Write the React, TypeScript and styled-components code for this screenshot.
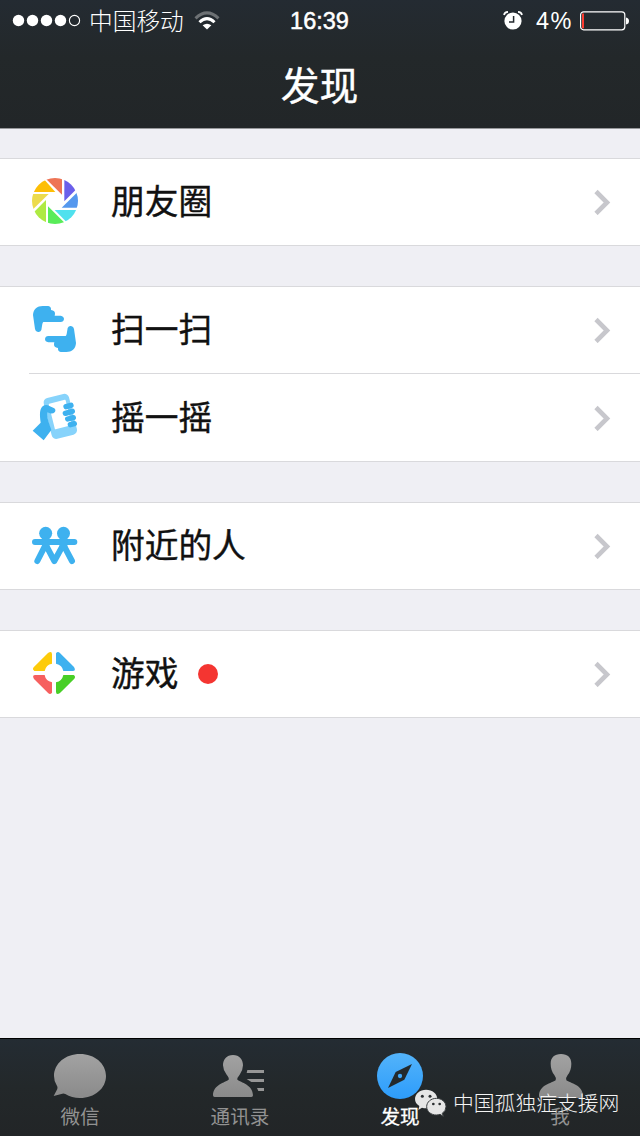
import React from 'react';
import styled, { createGlobalStyle } from 'styled-components';

const Global = createGlobalStyle`
  * { box-sizing: border-box; }
  body {
    margin: 0;
    background: #efeff4;
    font-family: "Liberation Sans", "Noto Sans CJK SC", sans-serif;
  }
`;

const cjk = '"Noto Sans CJK SC", sans-serif';

const Screen = styled.div`
  width: 640px;
  height: 1136px;
  display: flex;
  flex-direction: column;
  position: relative;
  overflow: hidden;
  background: #efeff4;
`;

const Header = styled.header`
  height: 129px;
  flex: none;
  color: #fff;
  background: linear-gradient(#242b32, #23282a 45%, #222628);
  border-bottom: 1px solid #97989b;
`;

const StatusBar = styled.div`
  height: 42px;
  display: grid;
  grid-template-columns: 1fr auto 1fr;
  align-items: center;
  padding: 0 11px 0 12px;
`;

const Signal = styled.div`
  display: flex;
  align-items: center;
`;

const Carrier = styled.span`
  font: 300 23.7px/38px ${cjk};
  padding-bottom: 2px;
  margin: 0 10px 0 7px;
`;

const Time = styled.span`
  font-size: 23.5px;
  line-height: 40px;
  padding-right: 2px;
  -webkit-text-stroke: 0.5px #fff;
`;

const Power = styled.div`
  display: flex;
  align-items: center;
  justify-content: flex-end;
  margin-right: -1px;
`;

const Percent = styled.span`
  font: 300 23.5px/38px "Liberation Sans", sans-serif;
  letter-spacing: 1.5px;
  margin: 0 7px 0 13px;
`;

const Title = styled.h1`
  margin: 0;
  padding-right: 1px;
  font: 400 38.8px/82px ${cjk};
  text-align: center;
  -webkit-text-stroke: 0.4px #fff;
`;

const Content = styled.main`
  flex: 1;
  display: flex;
  flex-direction: column;
  gap: 40px;
  padding-top: 29px;
`;

const Group = styled.section`
  background: #fff;
  border-top: 1px solid #d9d9dc;
  border-bottom: 1px solid #d9d9dc;
`;

const Row = styled.div<{ $tall?: boolean }>`
  height: ${(p) => (p.$tall ? 87 : 86)}px;
  display: flex;
  align-items: center;
  padding: 0 29px 0 31px;
`;

const Divider = styled.div`
  height: 1px;
  margin-left: 29px;
  background: #d9d9dc;
`;

const RowIcon = styled.svg`
  width: 48px;
  height: 48px;
  overflow: visible;
  flex: none;
`;

const Label = styled.span`
  margin-left: 32px;
  padding-bottom: 4px;
  font: 400 33.7px/48px ${cjk};
  color: #111;
  -webkit-text-stroke: 0.4px #111;
`;

const Dot = styled.i`
  width: 20px;
  height: 20px;
  margin-left: 20px;
  border-radius: 50%;
  background: #f43531;
`;

const ChevronIcon = styled.svg`
  margin-left: auto;
`;

const TabBar = styled.nav`
  height: 98px;
  flex: none;
  display: flex;
  border-top: 1px solid #000;
  background: linear-gradient(#242c33, #23282a 50%, #222527);
`;

const Tab = styled.div<{ $active?: boolean }>`
  flex: 1;
  display: flex;
  flex-direction: column;
  align-items: center;
  padding-top: 13px;
  color: ${(p) => (p.$active ? '#fff' : '#929292')};
  font: 400 19.6px/31px ${cjk};
  -webkit-text-stroke: ${(p) => (p.$active ? '0.3px #fff' : '0')};
`;

const TabIcon = styled.svg`
  width: 60px;
  height: 48px;
  overflow: visible;
`;

const Watermark = styled.div`
  position: absolute;
  left: 414px;
  top: 1087px;
  display: flex;
  align-items: center;
  gap: 6px;
  color: #f4f4f4;
  font: 300 20.8px/32px ${cjk};
`;

const WatermarkText = styled.span`
  padding-bottom: 2px;
  line-height: 30px;
`;

const Chevron = () => (
  <ChevronIcon width="17" height="26" viewBox="0 0 17 26" fill="none" stroke="#c7c7cc" strokeWidth="4.6">
    <path d="M2 2.500 13 13.500 2 24.500" />
  </ChevronIcon>
);

const MomentsIcon = () => (
  <RowIcon viewBox="33 84 144 144">
    <clipPath id="lens"><circle cx="105" cy="153" r="69" /></clipPath>
    <g clipPath="url(#lens)">
      <path fill="#ee7455" d="M79 88V80H126V134Z" />
      <path fill="#6b5fea" d="M133 80H172V115L133 154Z" />
      <path fill="#5598ee" d="M172 127H180V173H125Z" />
      <path fill="#50e1ee" d="M104 180H175V220H143Z" />
      <path fill="#59ec59" d="M84 169 135 220V225H84Z" />
      <path fill="#aeea43" d="M78 150V225H40V188Z" />
      <path fill="#ecdb4c" d="M30 132H86L36 181H30Z" />
      <path fill="#fdbe06" d="M36 126V92L72 88 106 126Z" />
    </g>
  </RowIcon>
);

const handPath =
  'M39 75C40 57 52 48 68 48H85Q94 50 93 60Q106 62 105 72L104 77H122Q132 79 132 87Q131 96 122 96H70Q68 97 67 102L64 120Q61 127 54 126Q46 125 45 117Z';

const ScanIcon = () => (
  <RowIcon viewBox="33 48 144 144" fill="#3eb1ef">
    <path d={handPath} />
    <path d={handPath} transform="rotate(180 103.5 117)" />
  </RowIcon>
);

const ShakeIcon = () => (
  <RowIcon viewBox="33 311 144 144">
    <g transform="rotate(-14 121 378)">
      <rect x="82" y="315" width="78" height="126" rx="14" fill="#87d3fb" />
      <rect x="96" y="333" width="52" height="79" rx="2" fill="#fff" />
    </g>
    <path
      fill="#3eb1ef"
      d="M38 421 62 397C59 374 58 357 68 348Q77 341 88 347L103 354Q109 359 104 366Q99 371 90 369L82 366C79 380 88 400 94 419L71 450Z"
    />
    <g stroke="#3eb1ef" strokeWidth="16" strokeLinecap="round">
      <path d="M138 349 153 345" />
      <path d="M136 369 157 363" />
      <path d="M143 386 160 382" />
      <path d="M151 403 163 400" />
    </g>
  </RowIcon>
);

const NearbyIcon = () => (
  <RowIcon viewBox="33 66 144 144" fill="#3eb1ef">
    <circle cx="77" cy="100" r="19.500" />
    <circle cx="130.500" cy="100" r="19.500" />
    <path
      d="M45 126H163M77 134 52 183M77 134 103 183 130 134 156 183"
      fill="none"
      stroke="#3eb1ef"
      strokeWidth="18"
      strokeLinecap="round"
      strokeLinejoin="round"
    />
    <path d="M66 112H88V150L78 152 66 140ZM119 112H142V140L130 152 119 145Z" />
  </RowIcon>
);

const petal = 'M43 123Q36 118 41 112L84 69Q96 62 96 73V101Q78 104 74 123Z';

const GamesIcon = () => (
  <RowIcon viewBox="33 60 144 144">
    <path d={petal} fill="#fdcb0a" />
    <path d={petal} fill="#3eb1ef" transform="rotate(90 102 129)" />
    <path d={petal} fill="#48cf27" transform="rotate(180 102 129)" />
    <path d={petal} fill="#f6605f" transform="rotate(270 102 129)" />
  </RowIcon>
);

const Wifi = () => (
  <svg width="26" height="20" viewBox="0 0 26 20" fill="none" strokeWidth="3">
    <path d="M1.500 7.300Q13-3.500 24.500 7.300" stroke="#6d7174" />
    <path d="M5.500 11.300Q13 4 20.500 11.300" stroke="#fff" />
    <path d="M13 18.500 8.600 14.300Q13 11 17.400 14.300Z" fill="#fff" />
  </svg>
);

const Alarm = () => (
  <svg width="20" height="20" viewBox="0 0 20 20">
    <circle cx="10" cy="10" r="8.600" fill="#fff" />
    <path d="M1 4Q1.500 1 5 0.900M19 4Q18.500 1 15 0.900" fill="none" stroke="#fff" strokeWidth="1.700" />
    <path d="M10.600 5V11H6" fill="none" stroke="#23292e" strokeWidth="1.500" />
  </svg>
);

const Battery = () => (
  <svg width="50" height="20" viewBox="0 0 50 20">
    <rect x="0.600" y="0.800" width="44.200" height="18" rx="3" fill="none" stroke="#fff" strokeWidth="1.200" />
    <rect x="2" y="2.500" width="2" height="14.800" fill="#fb3b30" />
    <path d="M46 6.500Q49 7 49 10T46 13.500Z" fill="#fff" />
  </svg>
);

const App = () => (
  <Screen>
    <Global />
    <Header>
      <StatusBar>
        <Signal>
          <svg width="70" height="14" viewBox="0 0 70 14" fill="#fff">
            <circle cx="6.500" cy="6.500" r="5.700" />
            <circle cx="20.500" cy="6.500" r="5.700" />
            <circle cx="34.500" cy="6.500" r="5.700" />
            <circle cx="48.500" cy="6.500" r="5.700" />
            <circle cx="62.500" cy="6.500" r="5.100" fill="none" stroke="#fff" strokeWidth="1.100" />
          </svg>
          <Carrier>中国移动</Carrier>
          <Wifi />
        </Signal>
        <Time>16:39</Time>
        <Power>
          <Alarm />
          <Percent>4%</Percent>
          <Battery />
        </Power>
      </StatusBar>
      <Title>发现</Title>
    </Header>
    <Content>
      <Group>
        <Row><MomentsIcon /><Label>朋友圈</Label><Chevron /></Row>
      </Group>
      <Group>
        <Row><ScanIcon /><Label>扫一扫</Label><Chevron /></Row>
        <Divider />
        <Row $tall><ShakeIcon /><Label>摇一摇</Label><Chevron /></Row>
      </Group>
      <Group>
        <Row><NearbyIcon /><Label>附近的人</Label><Chevron /></Row>
      </Group>
      <Group>
        <Row><GamesIcon /><Label>游戏</Label><Dot /><Chevron /></Row>
      </Group>
    </Content>
    <TabBar>
      <Tab>
        <TabIcon viewBox="150 66 180 144" fill="url(#gray)">
          <defs>
            <linearGradient id="gray" x1="0" y1="0" x2="0" y2="1">
              <stop stopColor="#a2a2a2" />
              <stop offset="1" stopColor="#8a8a8a" />
            </linearGradient>
          </defs>
          <path d="M240 72C284 72 318 101 318 138S284 204 240 204Q215 204 196 192Q190 189 184 192L161 198 172 177Q174 171 170 166Q162 153 162 138C162 101 196 72 240 72Z" />
        </TabIcon>
        微信
      </Tab>
      <Tab>
        <TabIcon viewBox="630 66 180 144" fill="url(#gray)">
          <path d="M699 75C718 75 729 88 729 106Q729 120 719 134Q711 143 712 149C722 157 759 164 759 196Q759 201 754 201H644Q639 201 639 196C639 164 676 157 686 149Q688 143 680 134Q669 120 669 106C669 88 680 75 699 75Z" />
          <path d="M742 120H792V129H740ZM740 147H792V156H754ZM771 174H792V183H775Z" fill="#969696" />
        </TabIcon>
        通讯录
      </Tab>
      <Tab $active>
        <TabIcon viewBox="150 66 180 144">
          <linearGradient id="blue" x1="0" y1="0" x2="0" y2="1">
            <stop stopColor="#53b3fa" />
            <stop offset="1" stopColor="#2d9cfb" />
          </linearGradient>
          <circle cx="240" cy="138" r="69" fill="url(#blue)" />
          <path d="M276 102 253 149 204 174 227 126Z" fill="#23292c" />
          <circle cx="240" cy="138" r="6.500" fill="#3fa8fb" />
        </TabIcon>
        发现
      </Tab>
      <Tab>
        <TabIcon viewBox="630 66 180 144" fill="url(#gray)">
          <path d="M723 72C743 72 754 83 754 101Q754 121 743 135Q736 144 739 151C750 160 789 164 789 199Q789 204 783 204H663Q657 204 657 199C657 164 696 160 707 151Q710 144 703 135Q692 121 692 101C692 83 703 72 723 72Z" />
        </TabIcon>
        我
      </Tab>
    </TabBar>
    <Watermark>
      <svg width="33" height="30" viewBox="282 177 99 90">
        <path d="M318 182C337 182 352 194 352 210S337 238 318 238Q312 238 306 236L295 243 298 231Q285 223 285 210C285 194 300 182 318 182Z" fill="#e6e6e6" />
        <path d="M349 208C365 208 378 219 378 233Q378 245 367 253L370 262 360 256Q355 258 349 258C333 258 320 247 320 233S333 208 349 208Z" fill="#e6e6e6" stroke="#3a3e40" strokeWidth="3" />
        <g fill="#2b2f31">
          <circle cx="307" cy="202" r="4.500" />
          <circle cx="330" cy="202" r="4.500" />
          <circle cx="340" cy="225" r="4" />
          <circle cx="359" cy="225" r="4" />
        </g>
      </svg>
      <WatermarkText>中国孤独症支援网</WatermarkText>
    </Watermark>
  </Screen>
);

export default App;
